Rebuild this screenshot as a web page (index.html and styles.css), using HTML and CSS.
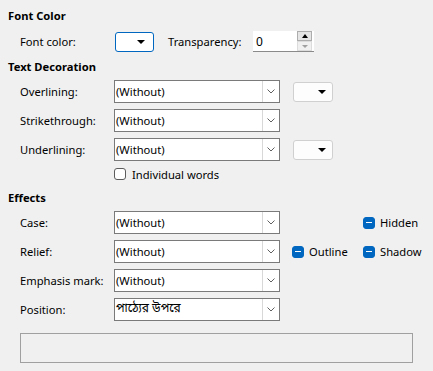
FILE: index.html
```html
<!DOCTYPE html>
<html>
<head>
<meta charset="utf-8">
<link rel="stylesheet" href="styles.css">
</head>
<body>
<div class="page">
  <div class="title t1">Font Color</div>
  <div class="row r-font">
    <span class="label">Font color:</span>
    <div class="colorbtn focused"><span class="tri"></span></div>
    <span class="label-tr">Transparency:</span>
    <div class="spin">
      <span class="spin-val">0</span>
      <div class="spin-btns">
        <span class="spin-up"><span class="tri-up"></span></span>
        <span class="spin-down"><span class="tri-down"></span></span>
      </div>
    </div>
  </div>

  <div class="title t2">Text Decoration</div>
  <div class="rows">
    <div class="row">
      <span class="label">Overlining:</span>
      <div class="combo"><span class="combo-text">(Without)</span><span class="combo-btn"><svg width="8" height="5" viewBox="0 0 8 5"><path d="M0.5 0.5 L4 4 L7.5 0.5" fill="none" stroke="#606060" stroke-width="1"/></svg></span></div>
      <div class="colorbtn plain"><span class="tri"></span></div>
    </div>
    <div class="row">
      <span class="label">Strikethrough:</span>
      <div class="combo"><span class="combo-text">(Without)</span><span class="combo-btn"><svg width="8" height="5" viewBox="0 0 8 5"><path d="M0.5 0.5 L4 4 L7.5 0.5" fill="none" stroke="#606060" stroke-width="1"/></svg></span></div>
    </div>
    <div class="row">
      <span class="label">Underlining:</span>
      <div class="combo"><span class="combo-text">(Without)</span><span class="combo-btn"><svg width="8" height="5" viewBox="0 0 8 5"><path d="M0.5 0.5 L4 4 L7.5 0.5" fill="none" stroke="#606060" stroke-width="1"/></svg></span></div>
      <div class="colorbtn plain"><span class="tri"></span></div>
    </div>
  </div>
  <div class="row r-check">
    <span class="label"></span>
    <span class="check"><span class="box"></span><span class="check-text">Individual words</span></span>
  </div>

  <div class="title t3">Effects</div>
  <div class="rows">
    <div class="row">
      <span class="label">Case:</span>
      <div class="combo"><span class="combo-text">(Without)</span><span class="combo-btn"><svg width="8" height="5" viewBox="0 0 8 5"><path d="M0.5 0.5 L4 4 L7.5 0.5" fill="none" stroke="#606060" stroke-width="1"/></svg></span></div>
      <div class="extras">
        <span class="slot"></span>
        <span class="slot check"><span class="box ind"><span class="dash"></span></span><span class="check-text">Hidden</span></span>
      </div>
    </div>
    <div class="row">
      <span class="label">Relief:</span>
      <div class="combo"><span class="combo-text">(Without)</span><span class="combo-btn"><svg width="8" height="5" viewBox="0 0 8 5"><path d="M0.5 0.5 L4 4 L7.5 0.5" fill="none" stroke="#606060" stroke-width="1"/></svg></span></div>
      <div class="extras">
        <span class="slot check"><span class="box ind"><span class="dash"></span></span><span class="check-text">Outline</span></span>
        <span class="slot check"><span class="box ind"><span class="dash"></span></span><span class="check-text">Shadow</span></span>
      </div>
    </div>
    <div class="row">
      <span class="label">Emphasis mark:</span>
      <div class="combo"><span class="combo-text">(Without)</span><span class="combo-btn"><svg width="8" height="5" viewBox="0 0 8 5"><path d="M0.5 0.5 L4 4 L7.5 0.5" fill="none" stroke="#606060" stroke-width="1"/></svg></span></div>
    </div>
    <div class="row">
      <span class="label">Position:</span>
      <div class="combo"><span class="combo-text bn">পাঠ্যের উপরে</span><span class="combo-btn"><svg width="8" height="5" viewBox="0 0 8 5"><path d="M0.5 0.5 L4 4 L7.5 0.5" fill="none" stroke="#606060" stroke-width="1"/></svg></span></div>
    </div>
  </div>

  <div class="preview"></div>
</div>
</body>
</html>
```

FILE: styles.css
```css
html, body {
  margin: 0;
  padding: 0;
  background: #f0f0f0;
}
body {
  font-family: "Noto Sans", "Open Sans", "Noto Sans Bengali", sans-serif;
  font-size: 11.2px;
  color: #000;
}
.page {
  width: 433px;
  height: 371px;
  box-sizing: border-box;
  padding: 8px 0 0 0;
  overflow: hidden;
}
.title {
  font-weight: bold;
  height: 16px;
  line-height: 16px;
  padding-left: 8px;
}
.t2 { margin-top: 7px; }
.t3 { margin-top: 9px; }

.row {
  display: flex;
  align-items: center;
  height: 23px;
  padding-left: 20px;
}
.rows {
  display: flex;
  flex-direction: column;
  gap: 6px;
  margin-top: 5px;
}
.r-font {
  height: 21px;
  margin-top: 7px;
}
.label {
  width: 94px;
  flex: none;
  white-space: nowrap;
}
.label-tr {
  margin-left: 14px;
  width: 85px;
  flex: none;
}

.colorbtn {
  width: 39px;
  height: 20px;
  box-sizing: border-box;
  background: #fff;
  border-radius: 3px;
  display: flex;
  align-items: center;
  justify-content: flex-end;
  padding-right: 8px;
  flex: none;
}
.colorbtn.focused {
  border: 1px solid #0067c0;
  margin-left: 1px;
}
.colorbtn.plain {
  border: 1px solid #d0d0d0;
  width: 40px;
  margin-left: 13px;
  background: #fdfdfd;
  padding-right: 6px;
}
.tri {
  width: 0;
  height: 0;
  border-left: 4px solid transparent;
  border-right: 4px solid transparent;
  border-top: 4px solid #000;
}

.spin {
  width: 61px;
  height: 21px;
  box-sizing: border-box;
  background: #fff;
  border-bottom: 1px solid #8a8a8a;
  display: flex;
  align-items: center;
  justify-content: space-between;
  flex: none;
}
.spin-val {
  padding-left: 3px;
  font-size: 12px;
}
.spin-btns {
  display: flex;
  flex-direction: column;
  width: 15px;
  height: 20px;
  margin-right: 2px;
}
.spin-up, .spin-down {
  flex: 1;
  display: flex;
  align-items: center;
  justify-content: center;
  box-sizing: border-box;
}
.spin-up {
  border: 1px solid #adadad;
  background: #e5e5e5;
}
.spin-down {
  border: 1px solid #dcdcdc;
  background: #f0f0f0;
}
.tri-up {
  width: 0; height: 0;
  border-left: 3px solid transparent;
  border-right: 3px solid transparent;
  border-bottom: 4px solid #000;
}
.tri-down {
  width: 0; height: 0;
  border-left: 3px solid transparent;
  border-right: 3px solid transparent;
  border-top: 3px solid #a0a0a0;
}

.combo {
  width: 166px;
  height: 23px;
  box-sizing: border-box;
  border: 1px solid #7a7a7a;
  background: #fff;
  display: flex;
  align-items: stretch;
  flex: none;
}
.combo-text {
  flex: 1;
  padding-left: 1px;
  line-height: 21px;
  white-space: nowrap;
  overflow: hidden;
}
.combo-text.bn {
  font-family: "Noto Sans Bengali", "Noto Sans", sans-serif;
  font-size: 12px;
}
.combo-btn {
  width: 17px;
  box-sizing: border-box;
  border-left: 1px solid #d8d8d8;
  display: flex;
  align-items: center;
  justify-content: center;
}

.r-check {
  height: 14px;
  margin-top: 6px;
}
.check {
  display: flex;
  align-items: center;
  white-space: nowrap;
}
.box {
  width: 12px;
  height: 12px;
  box-sizing: border-box;
  border: 1px solid #5c5c5c;
  border-radius: 3px;
  background: #fff;
  flex: none;
  margin-right: 6px;
}
.box.ind {
  background: #0067c0;
  border-color: #0067c0;
  display: flex;
  align-items: center;
  justify-content: center;
  margin-right: 5px;
}
.dash {
  width: 6px;
  height: 1.5px;
  background: #fff;
}
.extras {
  display: flex;
  margin-left: 12px;
}
.slot {
  width: 71px;
}

.preview {
  margin: 12px 0 0 20px;
  width: 393px;
  height: 30px;
  box-sizing: border-box;
  border: 1px solid #a0a0a0;
  background: #f0f0f0;
}
```
